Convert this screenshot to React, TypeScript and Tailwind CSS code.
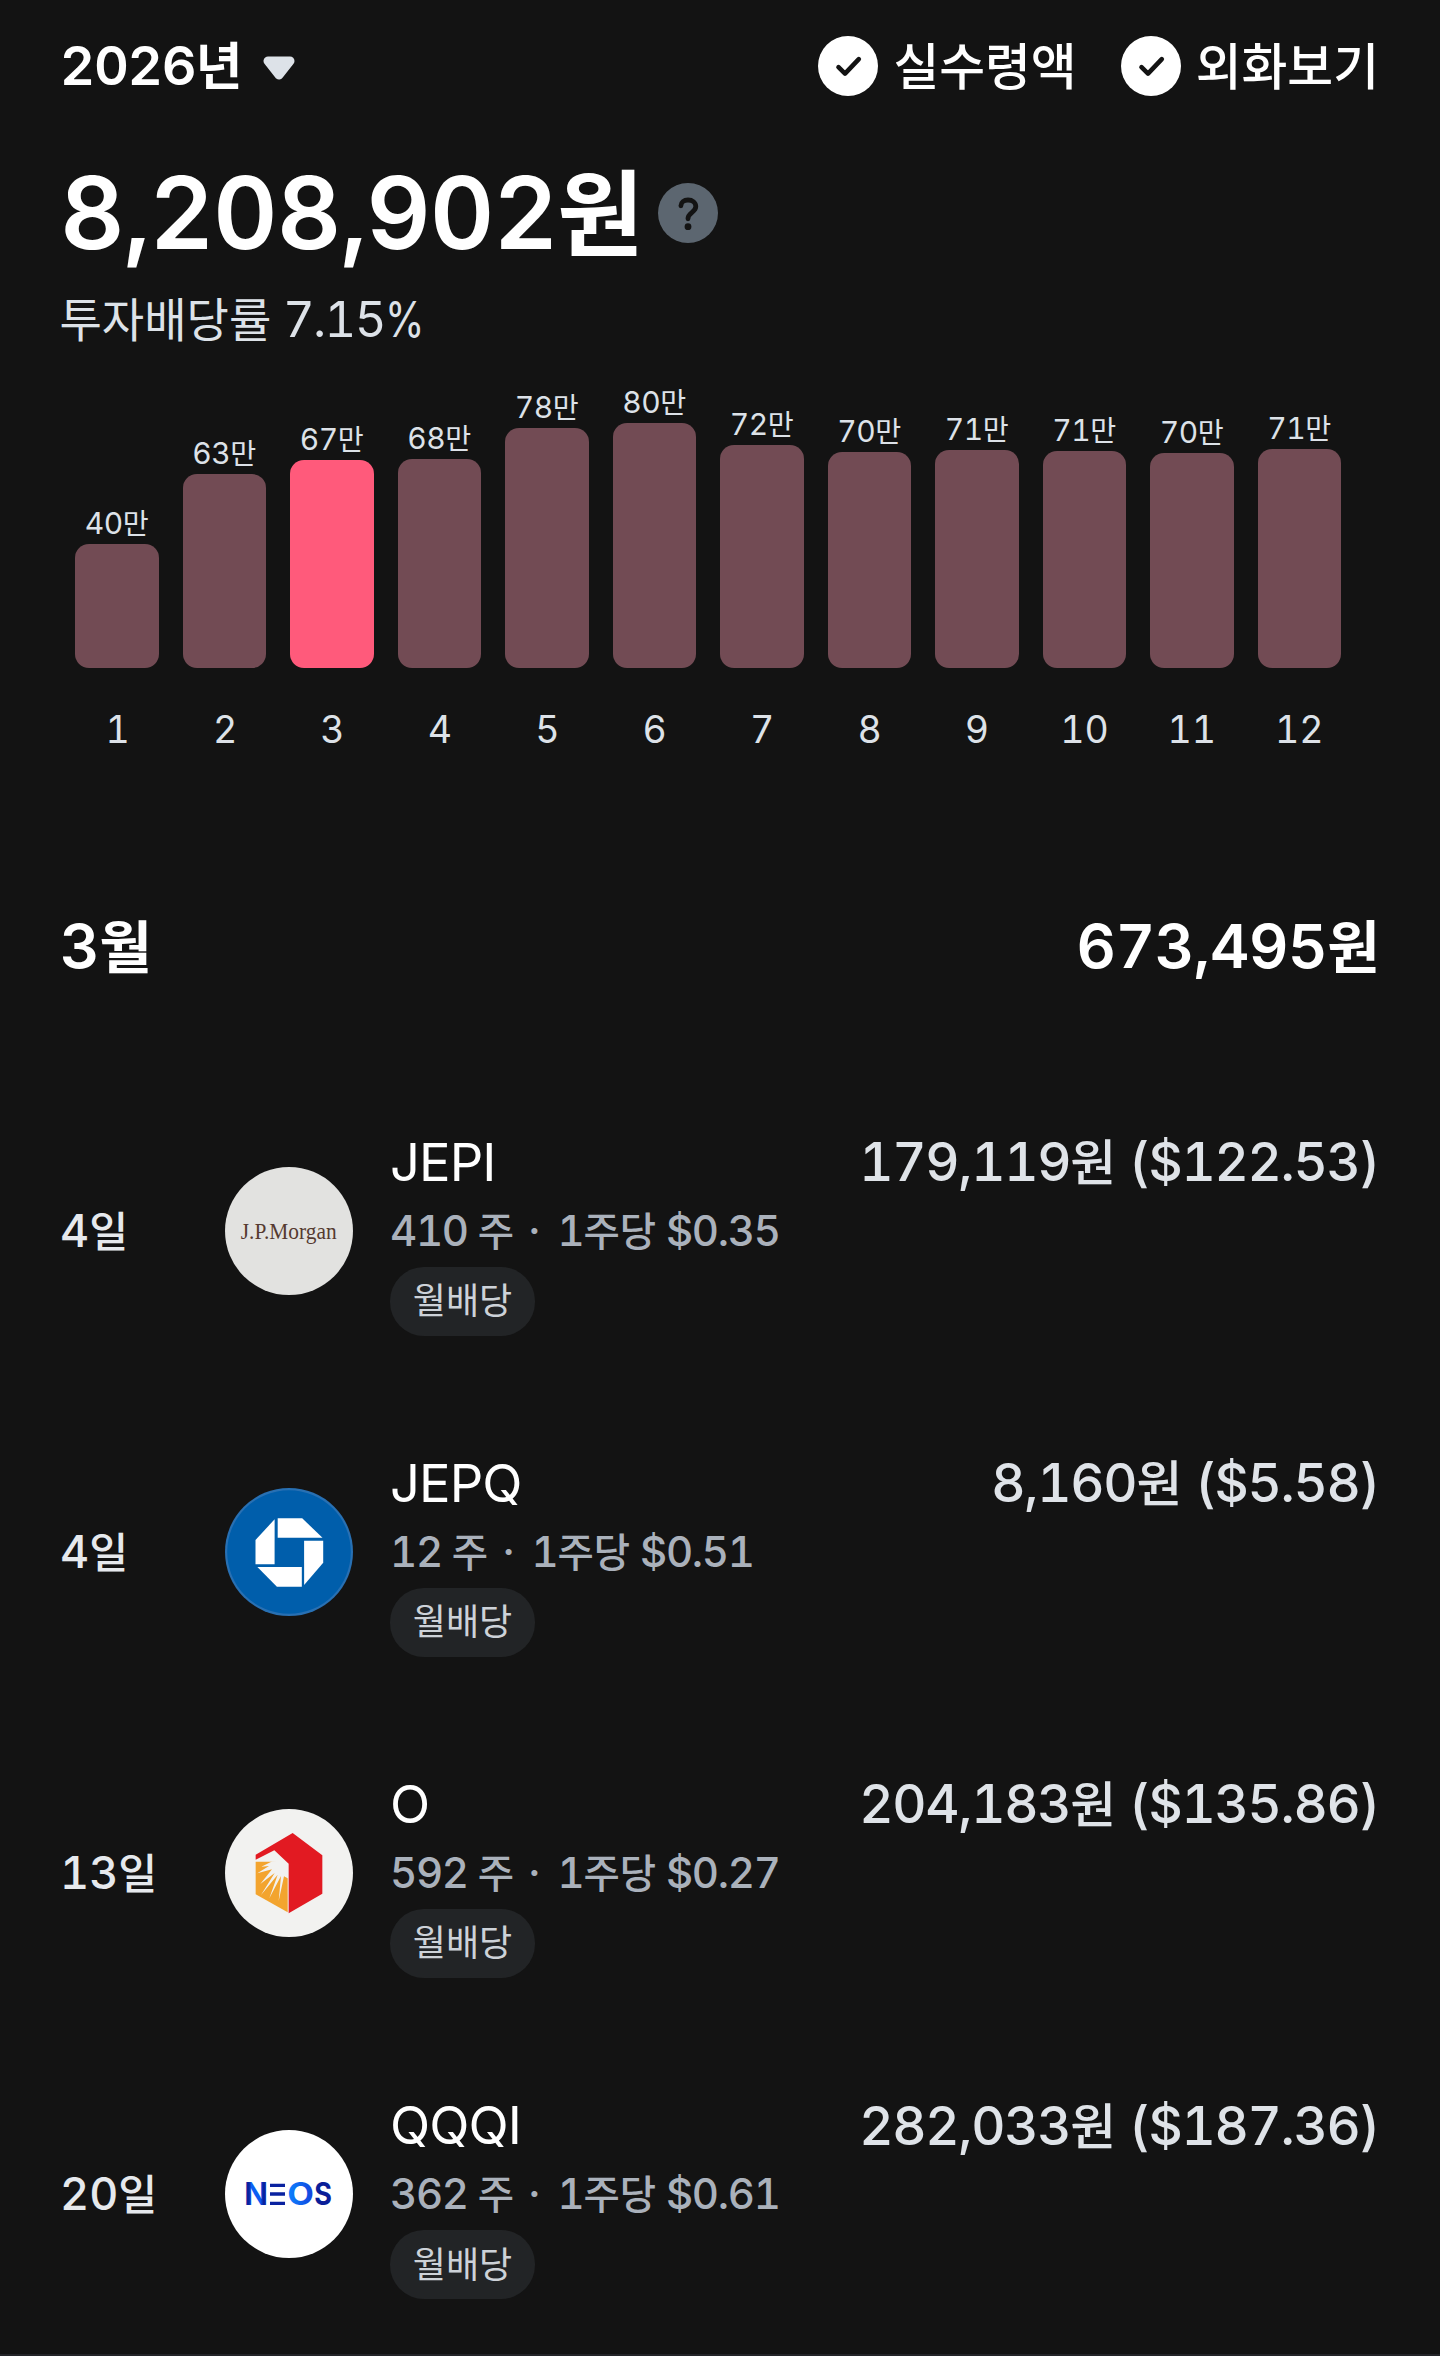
import React from 'react';

const HANGUL = /([\uac00-\ud7a3]+)/;

/** Sets Latin digits in Inter and Hangul runs in a slightly smaller Noto Sans CJK KR. */
function Mixed({ text }: { text: string }) {
  return (
    <>
      {text.split(HANGUL).map((run, i) =>
        HANGUL.test(run) ? (
          <span key={i} className="text-[0.94em] leading-[0] tracking-normal">
            {run}
          </span>
        ) : (
          <React.Fragment key={i}>{run}</React.Fragment>
        ),
      )}
    </>
  );
}

function CheckOption({ label }: { label: string }) {
  return (
    <div className="flex items-center">
      <svg viewBox="0 0 60 60" className="size-[60px]">
        <circle cx="30" cy="30" r="30" fill="#ffffff" />
        <path
          d="M20.5 31.2 27 37.6 40.8 23.2"
          fill="none"
          stroke="#131313"
          strokeWidth="4.6"
          strokeLinecap="round"
          strokeLinejoin="round"
        />
      </svg>
      <span className="ml-[15px] text-[53px] leading-[60px] font-medium">
        <Mixed text={label} />
      </span>
    </div>
  );
}

const months = [
  { label: '40만', height: 124 },
  { label: '63만', height: 194.5 },
  { label: '67만', height: 208, active: true },
  { label: '68만', height: 209.5 },
  { label: '78만', height: 240.5 },
  { label: '80만', height: 245.5 },
  { label: '72만', height: 223 },
  { label: '70만', height: 216.5 },
  { label: '71만', height: 218 },
  { label: '71만', height: 217.5 },
  { label: '70만', height: 215.5 },
  { label: '71만', height: 219.5 },
];

function JpMorganLogo() {
  return (
    <div className="flex size-32 items-center justify-center rounded-full bg-[#e2e2e0]">
      <span className="mt-0.5 scale-x-[0.91] font-['Liberation_Serif',serif] text-[23.5px] leading-none text-[#553a30]">
        J.P.Morgan
      </span>
    </div>
  );
}

function ChaseLogo() {
  return (
    <svg viewBox="0 0 128 128" className="size-32">
      <circle cx="64" cy="64" r="64" fill="#2870b3" />
      <circle cx="64" cy="64" r="61.8" fill="#005eab" />
      <g fill="#ffffff">
        <path d="M52.7 30.3H77.2L97.5 49.7H52.7Z" />
        <path d="M79.1 52.7H98.2V74.7L79.1 97Z" />
        <path d="M32.4 79H76.8V98.7H51.9Z" />
        <path d="M49.6 31.3V76.3H30.5V52Z" />
      </g>
    </svg>
  );
}

function RealtyIncomeLogo() {
  return (
    <svg viewBox="15 16 384 384" className="size-32">
      <circle cx="207" cy="208" r="192" fill="#f2f2f0" />
      <path d="M107 174H203V326L107 272Z" fill="#f3a42e" />
      <path
        d="M157 173 124 189 147 187 112 209 156 197 121 241 164 208 123 274 173 213 148 284 183 217 176 292 192 218 203 224 209 224V170Z"
        fill="#f2f2f0"
      />
      <path d="M218 88 307 155V270L206 329V180L163 140 107 168V153Z" fill="#e21a22" />
    </svg>
  );
}

function NeosLogo() {
  return (
    <svg viewBox="15 16 384 384" className="size-32 font-[Inter]">
      <defs>
        <linearGradient id="neosN" x1="0" y1="0" x2="1" y2="0">
          <stop offset="0.2" stopColor="#0a22a0" />
          <stop offset="0.3" stopColor="#0a62f5" />
          <stop offset="0.68" stopColor="#0a5af0" />
          <stop offset="0.8" stopColor="#0a22a0" />
        </linearGradient>
        <linearGradient id="neosO" x1="0" y1="0" x2="1" y2="0">
          <stop offset="0" stopColor="#0a86ff" />
          <stop offset="1" stopColor="#1440dc" />
        </linearGradient>
      </defs>
      <circle cx="207" cy="208" r="192" fill="#ffffff" />
      <g fontSize="92" fontWeight="700">
        <text x="73" y="242" fill="url(#neosN)" textLength="71" lengthAdjust="spacingAndGlyphs">
          N
        </text>
        <path d="M150 177h45v10h-45zM150 203h45v10h-45zM150 231h45v10h-45z" fill="#0a22a0" />
        <text x="202" y="241" fill="url(#neosO)" textLength="80" lengthAdjust="spacingAndGlyphs">
          O
        </text>
        <text x="283" y="241" fill="#0a1e98" textLength="53" lengthAdjust="spacingAndGlyphs">
          S
        </text>
      </g>
    </svg>
  );
}

const payouts = [
  { day: '4일', logo: <JpMorganLogo />, ticker: 'JEPI', shares: '410 주', perShare: '1주당 $0.35', amount: '179,119원 ($122.53)' },
  { day: '4일', logo: <ChaseLogo />, ticker: 'JEPQ', shares: '12 주', perShare: '1주당 $0.51', amount: '8,160원 ($5.58)' },
  { day: '13일', logo: <RealtyIncomeLogo />, ticker: 'O', shares: '592 주', perShare: '1주당 $0.27', amount: '204,183원 ($135.86)' },
  { day: '20일', logo: <NeosLogo />, ticker: 'QQQI', shares: '362 주', perShare: '1주당 $0.61', amount: '282,033원 ($187.36)' },
];

export default function App() {
  return (
    <div className="flex h-[2356px] w-[1440px] flex-col overflow-hidden border-b-2 border-[#232428] bg-[#131313] pt-9 font-['Inter','Noto_Sans_CJK_KR',sans-serif] whitespace-nowrap text-white tabular-nums">
      <header className="flex h-[60px] items-center justify-between pr-[61px] pl-[60px]">
        <div className="flex items-center">
          <span className="text-[54px] leading-[60px] font-semibold tracking-[-1px]">
            <Mixed text="2026년" />
          </span>
          <svg viewBox="0 0 32 24" className="mt-[3px] ml-[21px] h-6 w-8">
            <path
              d="M5 5H27L16 19Z"
              fill="#dde2e8"
              stroke="#dde2e8"
              strokeWidth="9"
              strokeLinejoin="round"
            />
          </svg>
        </div>
        <div className="flex gap-[44px]">
          <CheckOption label="실수령액" />
          <CheckOption label="외화보기" />
        </div>
      </header>

      <div className="mt-[77px] flex h-20 items-center pl-[60px]">
        <h1 className="text-[100px] leading-[80px] font-semibold tracking-[-1.05px]">
          <Mixed text="8,208,902원" />
        </h1>
        <svg viewBox="0 0 60 60" className="ml-[14px] size-[60px]">
          <circle cx="30" cy="30" r="30" fill="#5c6670" />
          <path
            d="M22.9 22.8C22.9 19.2 26 17 30 17c4.4 0 7.8 2.6 7.8 6.6 0 5.8-7.8 5.8-7.8 12.2"
            fill="none"
            stroke="#131313"
            strokeWidth="4.8"
            strokeLinecap="round"
          />
          <circle cx="30" cy="43.7" r="3.4" fill="#131313" />
        </svg>
      </div>

      <p className="mt-[37px] pl-[59.5px] text-[49px] leading-[60px] tracking-[-1.6px] text-[#dde2e8]">
        <Mixed text="투자배당률" />
        {' 7.15'}
        <span className="inline-block origin-left scale-x-[0.82]">%</span>
      </p>

      <section className="mt-[18px] ml-[63px] w-[1290px]">
        <div className="grid h-[300px] grid-cols-12">
          {months.map((month, i) => (
            <div key={i} className="flex flex-col items-center justify-end">
              <span className="mb-[4px] text-[30px] leading-[34px] tracking-[-0.4px] text-[#dde2e8]">
                <Mixed text={month.label} />
              </span>
              <div
                className={`w-[83.5px] rounded-[14px] ${month.active ? 'bg-[#ff5a7b]' : 'bg-[#724b54]'}`}
                style={{ height: month.height }}
              />
            </div>
          ))}
        </div>
        <div className="mt-[37px] grid grid-cols-12 pl-px text-center text-[37.5px] leading-[50px] text-[#dde2e8]">
          {months.map((_, i) => (
            <span key={i}>{i + 1}</span>
          ))}
        </div>
      </section>

      <div className="mt-[156px] flex justify-between px-[60px] text-[61px] leading-[70px] font-semibold tracking-[-0.35px]">
        <h2>
          <Mixed text="3월" />
        </h2>
        <span>
          <Mixed text="673,495원" />
        </span>
      </div>

      <ul className="mt-[89px]">
        {payouts.map((payout) => (
          <li key={payout.ticker} className="flex h-[321.2px] items-center px-[60px]">
            <span className="w-[165px] text-[45px] leading-[60px] font-medium text-[#e6e9ed]">
              <Mixed text={payout.day} />
            </span>
            {payout.logo}
            <div className="mt-[6px] ml-[37px] flex flex-col items-start">
              <span className="text-[52.5px] leading-[60px] tracking-[-0.9px]">{payout.ticker}</span>
              <span className="mt-[9px] flex text-[42px] leading-[60px] font-medium tracking-[-1.3px] text-[#aab1bb]">
                <span>
                  <Mixed text={payout.shares} />
                </span>
                <span className="mr-[18px] ml-[14px]">·</span>
                <span>
                  <Mixed text={payout.perShare} />
                </span>
              </span>
              <span className="mt-[6px] flex h-[69px] w-[145px] items-center justify-center rounded-[34px] bg-[#222426] text-[38.4px] leading-[60px] text-[#cdd2d8]">
                <Mixed text="월배당" />
              </span>
            </div>
            <span className="mt-[62px] mr-px ml-auto self-start text-[53px] leading-[60px] font-medium tracking-[-1.3px] text-[#dfe3e8]">
              <Mixed text={payout.amount} />
            </span>
          </li>
        ))}
      </ul>
    </div>
  );
}
